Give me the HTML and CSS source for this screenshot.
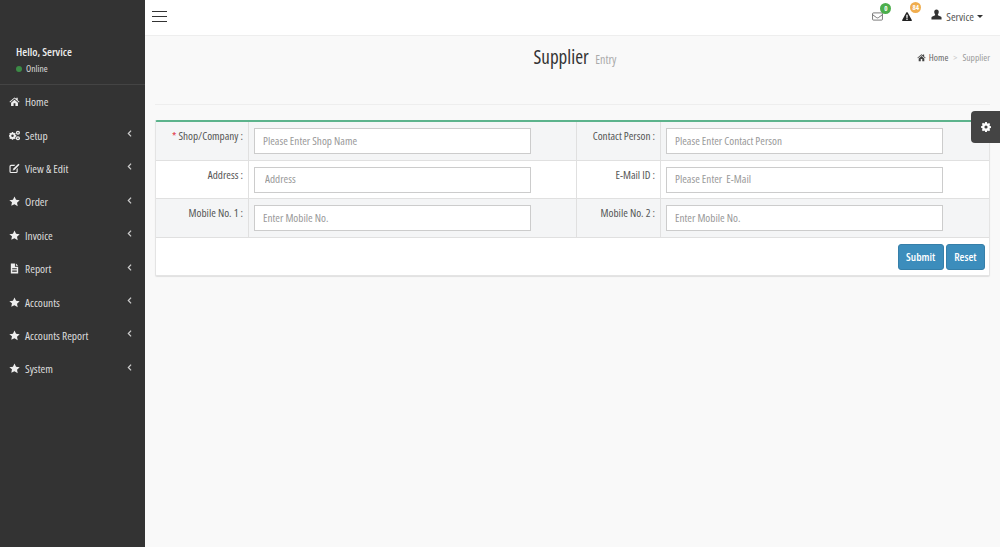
FILE: index.html
```html
<!DOCTYPE html>
<html lang="en">
<head>
<meta charset="utf-8">
<title>Supplier Entry</title>
<link rel="stylesheet" href="styles.css">
</head>
<body>
<svg class="defs" width="0" height="0" aria-hidden="true">
  <symbol id="i-home" viewBox="0 0 24 24"><path d="M12 3 1 12.6l1.3 1.5L12 5.700l9.700 8.400 1.300-1.500-4-3.500V4h-3v2.100zM4.500 14.500V22h5.500v-6h4v6h5.500v-7.500L12 8z"/></symbol>
  <symbol id="i-cogs" viewBox="0 0 24 24"><path fill-rule="evenodd" d="M7 6h3l.5 2 1.700.8 1.900-1 2 2-1 1.900.8 1.800 2 .5v2.900l-2 .5-.8 1.800 1 1.900-2 2-1.900-1-1.700.7-.5 2.100H7l-.5-2.100-1.800-.7-1.800 1-2-2 1-1.900-.8-1.800-2-.5v-2.900l2-.5.8-1.800-1-1.900 2-2 1.800 1 1.800-.8zm1.500 6a3 3 0 1 0 0 6 3 3 0 0 0 0-6z" transform="translate(0 -1) scale(.9)"/><circle cx="19.500" cy="6" r="4.500"/><circle cx="19.500" cy="6" r="1.700" fill="#333"/><circle cx="19.500" cy="18" r="4.500"/><circle cx="19.500" cy="18" r="1.700" fill="#333"/></symbol>
  <symbol id="i-edit" viewBox="0 0 24 24"><path d="M4.500 4H14l-2.500 2.500h-7a1 1 0 0 0-1 1v11a1 1 0 0 0 1 1h11a1 1 0 0 0 1-1v-5l2.500-2.500v8A3.500 3.500 0 0 1 15.500 22h-11A3.500 3.500 0 0 1 1 18.500v-11A3.500 3.500 0 0 1 4.500 4z"/><path d="M20.500 1.500 23 4 12 15.500l-4 1 1-4zM9 14v1.500h1.500z"/></symbol>
  <symbol id="i-star" viewBox="0 0 24 24"><path d="m12 1 3.400 7.200 7.900 1-5.800 5.400 1.500 7.900L12 18l-7 3.500 1.500-7.900L.7 9.200l7.900-1z"/></symbol>
  <symbol id="i-file" viewBox="0 0 24 24"><path fill-rule="evenodd" d="M4 1h9v7h7v15H4zm11 0 5 5h-5zM7 11v1.800h10V11zm0 3.500v1.800h10v-1.800zm0 3.500v1.800h10V18z"/></symbol>
  <symbol id="i-chev" viewBox="0 0 6 9"><path d="M5 .8 1.500 4.500 5 8.200" fill="none" stroke="currentColor" stroke-width="1.600"/></symbol>
  <symbol id="i-mail" viewBox="0 0 24 20"><path fill="none" stroke="currentColor" stroke-width="1.700" d="M3 2h18a2 2 0 0 1 2 2v12a2 2 0 0 1-2 2H3a2 2 0 0 1-2-2V4a2 2 0 0 1 2-2zM1 6l9 6.500a3.500 3.500 0 0 0 4 0L23 6"/></symbol>
  <symbol id="i-warn" viewBox="0 0 24 24"><path fill-rule="evenodd" d="M12 1.500c.8 0 1.300.4 1.700 1.100l9.800 18c.5 1-.2 2.400-1.500 2.400H2c-1.300 0-2-1.400-1.500-2.400l9.800-18c.4-.7.900-1.100 1.700-1.100zM10.300 8l.4 8h2.600l.4-8zm.2 9.500v3h3v-3z"/></symbol>
  <symbol id="i-user" viewBox="0 0 24 24"><path d="M12 1c3.300 0 5 2.500 5 5.500 0 2-.8 4-2 5.300v1.700l7 3.500c1 .6 1 1.500 1 2.500V23H1v-3.500c0-1 .1-1.900 1-2.500l7-3.500v-1.700C7.800 10.500 7 8.500 7 6.500 7 3.500 8.700 1 12 1z"/></symbol>
  <symbol id="i-gear" viewBox="0 0 24 24"><path fill-rule="evenodd" d="M10 0h4l.6 3 2 .9 2.600-1.700 2.800 2.800-1.700 2.600.9 2 2.800.6v4l-2.800.6-.9 2 1.700 2.600-2.800 2.800-2.600-1.700-2 .9-.6 3h-4l-.6-3-2-.9-2.600 1.700L2 19.200l1.700-2.600-.9-2L0 14v-4l2.800-.6.9-2L2 4.800 4.800 2l2.600 1.700 2-.9zM12 8.200a3.800 3.800 0 1 0 0 7.600 3.800 3.800 0 0 0 0-7.600z"/></symbol>
</svg>

<div class="app">
  <aside class="sidebar">
    <div class="user-panel">
      <div class="user-name">Hello, Service</div>
      <div class="user-status"><span class="dot"></span>Online</div>
    </div>
    <nav class="menu">
      <a class="menu-item"><svg class="mi"><use href="#i-home"/></svg><span class="ml">Home</span></a>
      <a class="menu-item"><svg class="mi"><use href="#i-cogs"/></svg><span class="ml">Setup</span><svg class="chev"><use href="#i-chev"/></svg></a>
      <a class="menu-item"><svg class="mi"><use href="#i-edit"/></svg><span class="ml">View &amp; Edit</span><svg class="chev"><use href="#i-chev"/></svg></a>
      <a class="menu-item"><svg class="mi"><use href="#i-star"/></svg><span class="ml">Order</span><svg class="chev"><use href="#i-chev"/></svg></a>
      <a class="menu-item"><svg class="mi"><use href="#i-star"/></svg><span class="ml">Invoice</span><svg class="chev"><use href="#i-chev"/></svg></a>
      <a class="menu-item"><svg class="mi"><use href="#i-file"/></svg><span class="ml">Report</span><svg class="chev"><use href="#i-chev"/></svg></a>
      <a class="menu-item"><svg class="mi"><use href="#i-star"/></svg><span class="ml">Accounts</span><svg class="chev"><use href="#i-chev"/></svg></a>
      <a class="menu-item"><svg class="mi"><use href="#i-star"/></svg><span class="ml">Accounts Report</span><svg class="chev"><use href="#i-chev"/></svg></a>
      <a class="menu-item"><svg class="mi"><use href="#i-star"/></svg><span class="ml">System</span><svg class="chev"><use href="#i-chev"/></svg></a>
    </nav>
  </aside>

  <main class="main">
    <header class="topbar">
      <div class="burger"><span></span><span></span><span></span></div>
      <div class="top-right">
        <div class="top-icon"><svg class="ti-mail"><use href="#i-mail"/></svg><span class="badge badge-green">0</span></div>
        <div class="top-icon"><svg class="ti-warn"><use href="#i-warn"/></svg><span class="badge badge-orange">84</span></div>
        <div class="top-user"><svg class="ti-user"><use href="#i-user"/></svg><span>Service</span><span class="caret"></span></div>
      </div>
    </header>

    <section class="heading">
      <h1 class="title">Supplier <small>Entry</small></h1>
      <ol class="crumbs">
        <li><svg class="ci"><use href="#i-home"/></svg>Home</li>
        <li class="sep">&gt;</li>
        <li class="cur">Supplier</li>
      </ol>
    </section>
    <div class="rule"></div>

    <form class="box">
      <div class="grid">
        <label class="lbl shade"><span><i class="req">*</i> Shop/Company :</span></label>
        <div class="fld shade"><input class="inp" placeholder="Please Enter Shop Name"></div>
        <label class="lbl shade"><span>Contact Person :</span></label>
        <div class="fld shade"><input class="inp" placeholder="Please Enter Contact Person"></div>

        <label class="lbl"><span>Address :</span></label>
        <div class="fld"><input class="inp inp-addr" placeholder="Address"></div>
        <label class="lbl"><span>E-Mail ID :</span></label>
        <div class="fld"><input class="inp" placeholder="Please Enter  E-Mail"></div>

        <label class="lbl shade"><span>Mobile No. 1 :</span></label>
        <div class="fld shade"><input class="inp" placeholder="Enter Mobile No."></div>
        <label class="lbl shade"><span>Mobile No. 2 :</span></label>
        <div class="fld shade"><input class="inp" placeholder="Enter Mobile No."></div>
      </div>
      <div class="actions">
        <button class="btn" type="button">Submit</button>
        <button class="btn" type="button">Reset</button>
      </div>
    </form>
    <div class="gear-tab"><svg class="gear"><use href="#i-gear"/></svg></div>
  </main>
</div>
</body>
</html>
```

FILE: styles.css
```css
* { box-sizing: border-box; }
html, body { margin: 0; height: 100%; }
body {
  font-family: "Open Sans", "Liberation Sans", sans-serif;
  font-stretch: 75%;
  font-size: 11.2px;
  color: #444;
  background: #f9f9f9;
  overflow: hidden;
}
.defs { position: absolute; }
.app { display: flex; height: 547px; }

.sidebar { width: 145px; flex: none; background: #333; color: #e6e6e6; }
.user-panel { height: 85px; padding: 45px 0 0 16px; border-bottom: 1px solid #444; }
.user-name { font-size: 11.300px; font-weight: 600; line-height: 14px; color: #eee; }
.user-status { display: flex; align-items: center; gap: 4px; margin-top: 4px; font-size: 9.500px; line-height: 12px; color: #ddd; }
.dot { width: 6px; height: 6px; border-radius: 50%; background: #3c8b46; }
.menu-item { display: flex; align-items: center; height: 33.400px; padding: 0 13px 0 9px; }
.mi { width: 11px; height: 11px; fill: #eee; flex: none; }
.ml { margin-left: 5px; font-size: 11.400px; color: #ddd; flex: 1; }
.chev { width: 5px; height: 7px; color: #ccc; margin-top: -3px; }

.main { flex: 1; min-width: 0; position: relative; }
.topbar { height: 36px; background: #fff; border-bottom: 1px solid #eee; display: flex; align-items: center; justify-content: space-between; padding: 0 17px 2px 7px; }
.burger { display: flex; flex-direction: column; gap: 3.500px; width: 15px; }
.burger span { height: 1.500px; background: #333; }
.top-right { display: flex; align-items: center; }
.top-icon { position: relative; display: flex; }
.ti-mail { width: 11px; height: 9px; color: #555; margin-right: 19px; }
.ti-warn { width: 10px; height: 11px; fill: #222; margin-right: 19px; }
.ti-user { width: 11px; height: 11px; fill: #333; margin: -4px 4px 0 0; }
.badge { position: absolute; top: -9px; left: 8px; width: 11px; height: 11px; border-radius: 50%; color: #fff; font-size: 7px; line-height: 11px; text-align: center; font-weight: 700; }
.badge-green { background: #4cae4c; }
.badge-orange { background: #f0ad4e; }
.top-user { display: flex; align-items: center; font-size: 11.300px; color: #555; }
.caret { margin-left: 3px; border: 3px solid transparent; border-top-color: #333; border-bottom: 0; }

.heading { position: relative; height: 68px; padding-top: 8px; text-align: center; }
.title { margin: 0 0 0 5px; font-size: 19px; font-weight: 400; line-height: 26px; color: #333; }
.title small { font-size: 12px; color: #aaa; margin-left: 3px; }
.crumbs { position: absolute; right: 10px; top: 15px; list-style: none; margin: 0; padding: 0; display: flex; align-items: center; gap: 5px; font-size: 9.500px; line-height: 14px; color: #666; }
.ci { width: 9px; height: 9px; fill: #444; margin-right: 3px; vertical-align: -1px; }
.sep { color: #ccc; }
.cur { color: #999; }
.rule { height: 1px; margin: 0 10px 15px; background: #eeeeee; }

.box { margin: 0 10px; height: 156px; background: #fff; border: 1px solid #e4e4e4; border-top: 2px solid #5cb38c; box-shadow: 0 1px 1px rgba(0,0,0,.1); border-radius: 2px; }
.grid { display: grid; grid-template-columns: 92px 329px 83px 1fr; grid-auto-rows: 38.600px; }
.lbl, .fld { border-bottom: 1px solid #e0e0e0; }
.lbl { display: block; padding: 7px 5px 0 0; text-align: right; line-height: 14px; color: #555; }
.fld { border-left: 1px solid #e0e0e0; border-right: 1px solid #e0e0e0; padding: 6px 0 0 5px; }
.fld:nth-child(4n) { border-right: 0; }
.shade { background: #f4f5f6; }
.req { color: #e02b3c; font-style: normal; }
.inp { display: block; width: 277px; height: 26px; padding: 0 8px 2px; border: 1px solid #ccc; background: #fff; font: inherit; color: #555; outline: 0; }
.inp::placeholder { color: #999; opacity: 1; }
.inp-addr { padding-left: 10px; }
.actions { display: flex; justify-content: flex-end; gap: 2px; padding: 6px 4px 0 0; }
.btn { height: 26px; padding: 0 7.500px; border: 1px solid #367fa9; border-radius: 3px; background: #3c8dbc; color: #fff; font: inherit; font-weight: 600; }

.gear-tab { position: absolute; right: 0; top: 111px; width: 29px; height: 32px; background: #444; border-radius: 4px 0 0 4px; display: flex; align-items: center; justify-content: center; }
.gear { width: 10px; height: 10px; fill: #fff; }
```
